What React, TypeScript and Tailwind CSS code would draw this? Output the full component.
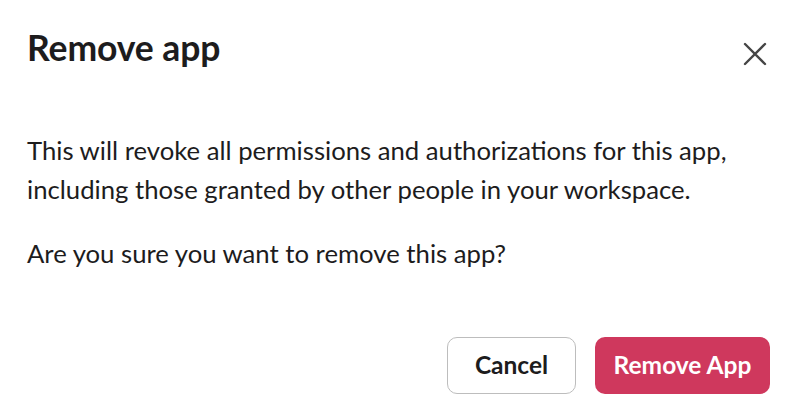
const CloseIcon = () => (
    <svg width="24" height="24" viewBox="0 0 24 24" fill="none" stroke="#454545" strokeWidth="2.4" strokeLinecap="round">
        <path d="M2 2L22 22M22 2L2 22" />
    </svg>
);

const App = () => {
    return (
        <div className="w-[800px] h-[414px] bg-white text-[#1d1c1d] font-['Lato','Liberation_Sans',sans-serif] overflow-hidden">
            <div className="flex items-start justify-between pl-[27px] pr-[33px] pt-[26px]">
                <h1 className="text-[35.5px] leading-[44px] font-bold tracking-[-0.1px]">Remove app</h1>
                <button className="mt-[16px]" aria-label="Close">
                    <CloseIcon />
                </button>
            </div>

            <div className="px-[27px] mt-[61px] text-[25.7px] leading-[38.5px] flex flex-col gap-[26px]">
                <p>
                    This will revoke all permissions and authorizations for this app,
                    <br />
                    including those granted by other people in your workspace.
                </p>
                <p>Are you sure you want to remove this app?</p>
            </div>

            <div className="flex justify-end gap-[19px] pr-[30px] mt-[64px]">
                <button className="h-[57px] w-[129px] rounded-[10px] border-[1.5px] border-[#bdbdbd] bg-white text-[24.5px] font-bold text-[#1d1c1d]">
                    Cancel
                </button>
                <button className="h-[57px] w-[175px] rounded-[10px] bg-[#cf385d] text-[24.5px] font-bold text-white">
                    Remove App
                </button>
            </div>
        </div>
    );
};

export default App;
